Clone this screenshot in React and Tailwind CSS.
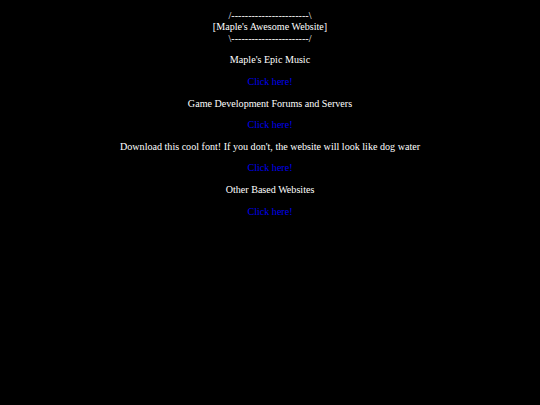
export default function App() {
  const sections = [
    "Maple's Epic Music",
    'Game Development Forums and Servers',
    "Download this cool font! If you don't, the website will look like dog water",
    'Other Based Websites',
  ];

  return (
    <div className="min-h-[405px] bg-black text-center text-white font-['Liberation_Serif',serif] text-[10.1px] leading-[11.6px] pt-[9.6px]">
      <p>
        /-----------------------\
        <br />
        [Maple's Awesome Website]
        <br />
        \-----------------------/
      </p>
      {sections.map((title) => (
        <div key={title}>
          <p className="mt-[10px]">{title}</p>
          <p className="mt-[10px]">
            <a href="#" className="text-[#0000ee]">
              Click here!
            </a>
          </p>
        </div>
      ))}
    </div>
  );
}
